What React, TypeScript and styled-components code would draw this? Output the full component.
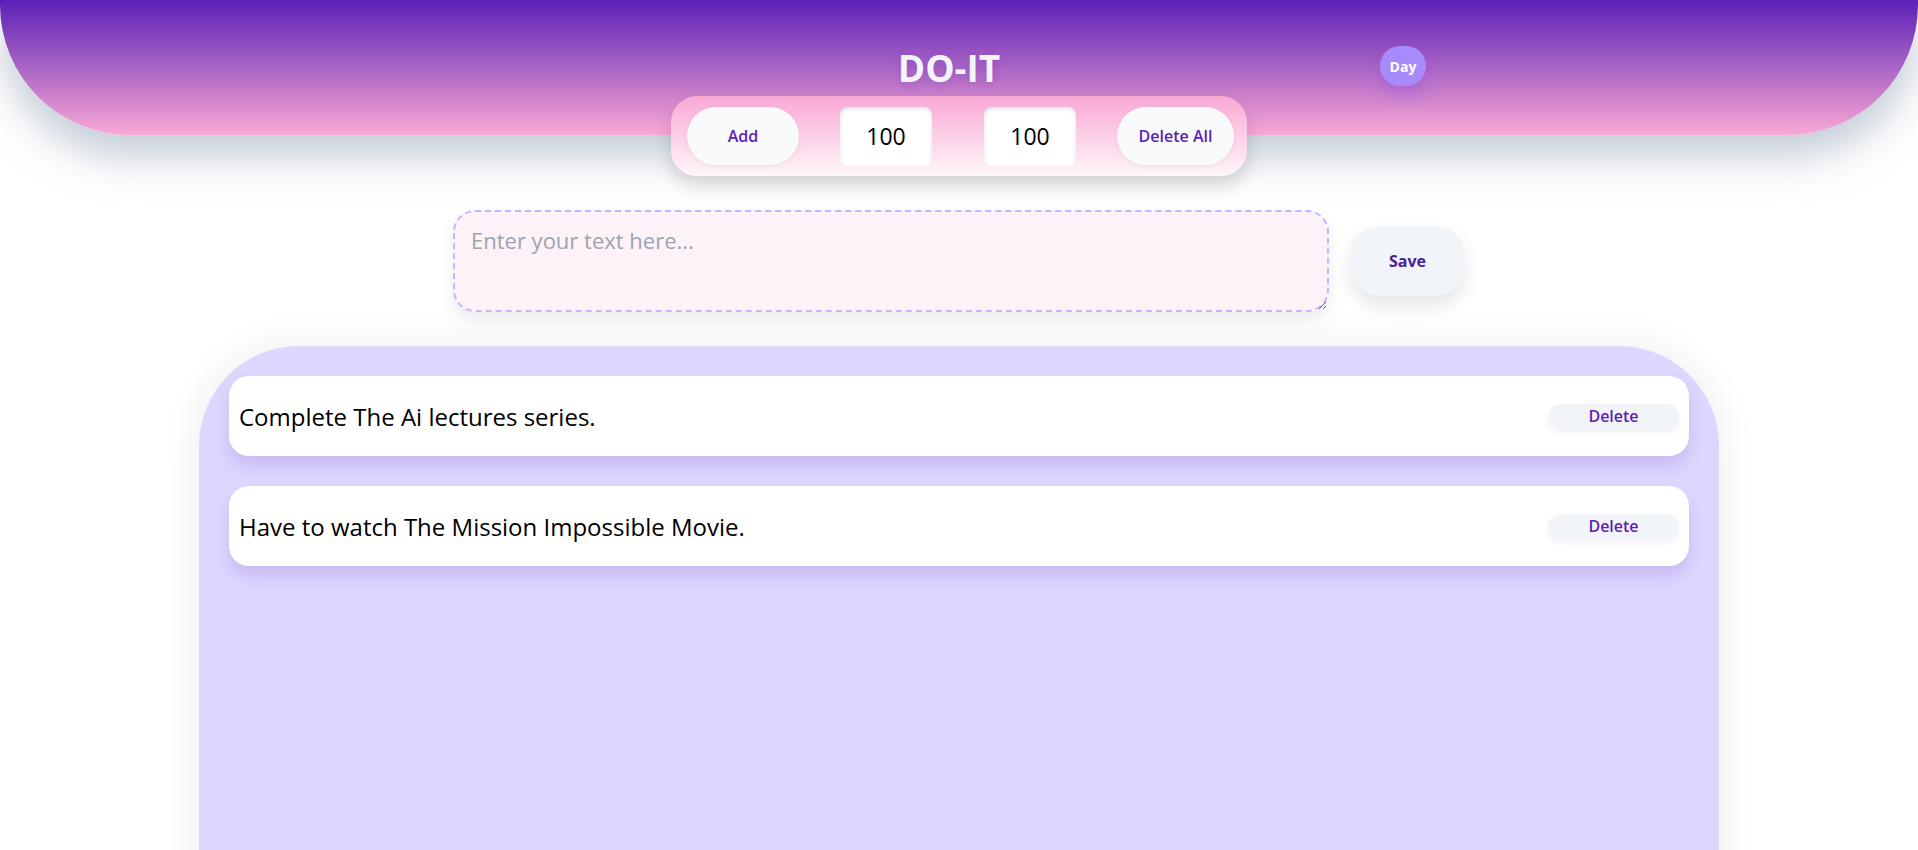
import styled, { createGlobalStyle } from "styled-components";

const GlobalStyle = createGlobalStyle`
  body {
    margin: 0;
    background: #ffffff;
    font-family: "Open Sans", "Noto Sans", sans-serif;
    overflow: hidden;
  }
  * {
    box-sizing: border-box;
  }
`;

const Header = styled.header`
  position: relative;
  height: 135px;
  display: flex;
  align-items: center;
  justify-content: center;
  background: linear-gradient(to bottom, #5b21b6, #f9a8d4);
  border-radius: 0 0 130px 130px;
  box-shadow: 0 22px 40px rgba(148, 163, 184, 0.55);
`;

const Title = styled.h1`
  margin: 0 20px 0 0;
  font-size: 37px;
  font-weight: 700;
  color: #f1f5f9;
  text-shadow: 0 4px 10px rgba(91, 33, 182, 0.25);
`;

const DayButton = styled.button`
  position: absolute;
  top: 46px;
  left: calc(50% + 421px);
  width: 46px;
  height: 40px;
  padding: 0;
  border: none;
  border-radius: 9999px;
  background: #a78bfa;
  color: #ffffff;
  font-family: inherit;
  font-size: 14px;
  font-weight: 700;
  box-shadow: 0 10px 15px rgba(124, 58, 237, 0.25);
`;

const Toolbar = styled.div`
  position: relative;
  width: 576px;
  height: 80px;
  margin: -39px auto 0;
  padding: 0 13px 0 16px;
  display: flex;
  align-items: center;
  gap: 41px;
  border-radius: 26px;
  background: linear-gradient(to bottom, #f9a8d4, #fff7fb);
  box-shadow: 0 10px 18px rgba(0, 0, 0, 0.15);
`;

const InputPair = styled.div`
  display: flex;
  gap: 52px;
`;

const PillButton = styled.button<{ $w: number }>`
  width: ${(p) => p.$w}px;
  height: 58px;
  border: none;
  border-radius: 9999px;
  background: #f8fafc;
  color: #5b21b6;
  font-family: inherit;
  font-size: 16px;
  font-weight: 600;
  box-shadow: 0 2px 6px rgba(0, 0, 0, 0.05);
`;

const NumberBox = styled.input`
  width: 92px;
  height: 59px;
  border: none;
  border-radius: 8px;
  background: #ffffff;
  text-align: center;
  font-family: inherit;
  font-size: 23px;
  color: #000000;
  outline: none;
  box-shadow: inset 0 2px 4px rgba(100, 116, 139, 0.2);
`;

const Composer = styled.div`
  margin-top: 34px;
  display: flex;
  align-items: center;
  justify-content: center;
  gap: 21px;
`;

const TextArea = styled.textarea`
  width: 876px;
  height: 102px;
  padding: 13px 16px;
  border: 2px dashed #c4b5fd;
  border-radius: 22px;
  background: #fdf2f8;
  font-family: inherit;
  font-size: 22px;
  outline: none;
  box-shadow: 0 8px 16px rgba(0, 0, 0, 0.08);

  &::placeholder {
    color: #9ca3af;
  }
`;

const SaveButton = styled.button`
  width: 115px;
  height: 70px;
  border: none;
  border-radius: 30px;
  background: #f1f5f9;
  color: #4c1d95;
  font-family: inherit;
  font-size: 16px;
  font-weight: 700;
  box-shadow: 0 10px 18px rgba(0, 0, 0, 0.1);
`;

const List = styled.section`
  width: 1520px;
  min-height: 640px;
  margin: 34px auto 0;
  padding: 30px;
  display: flex;
  flex-direction: column;
  gap: 30px;
  background: #ddd6fe;
  border-radius: 100px 100px 0 0;
  box-shadow: 0 0 40px rgba(0, 0, 0, 0.08);
`;

const Item = styled.div`
  height: 80px;
  padding: 0 10px;
  display: flex;
  align-items: center;
  justify-content: space-between;
  background: #ffffff;
  border-radius: 20px;
  box-shadow: 0 10px 15px rgba(91, 33, 182, 0.15);
`;

const ItemText = styled.p`
  margin: 0;
  font-size: 24px;
  color: #000000;
`;

const DeleteButton = styled.button`
  width: 131px;
  height: 25px;
  padding: 0;
  border: none;
  border-radius: 9999px;
  background: #f1f5f9;
  color: #5b21b6;
  font-family: inherit;
  font-size: 16px;
  font-weight: 600;
  box-shadow: 0 4px 6px rgba(0, 0, 0, 0.05);
`;

const todos = [
  "Complete The Ai lectures series.",
  "Have to watch The Mission Impossible Movie.",
];

export default function App() {
  return (
    <>
      <GlobalStyle />
      <Header>
        <Title>DO-IT</Title>
        <DayButton>Day</DayButton>
      </Header>
      <Toolbar>
        <PillButton $w={112}>Add</PillButton>
        <InputPair>
          <NumberBox defaultValue="100" />
          <NumberBox defaultValue="100" />
        </InputPair>
        <PillButton $w={117}>Delete All</PillButton>
      </Toolbar>
      <Composer>
        <TextArea placeholder="Enter your text here..." />
        <SaveButton>Save</SaveButton>
      </Composer>
      <List>
        {todos.map((t) => (
          <Item key={t}>
            <ItemText>{t}</ItemText>
            <DeleteButton>Delete</DeleteButton>
          </Item>
        ))}
      </List>
    </>
  );
}
